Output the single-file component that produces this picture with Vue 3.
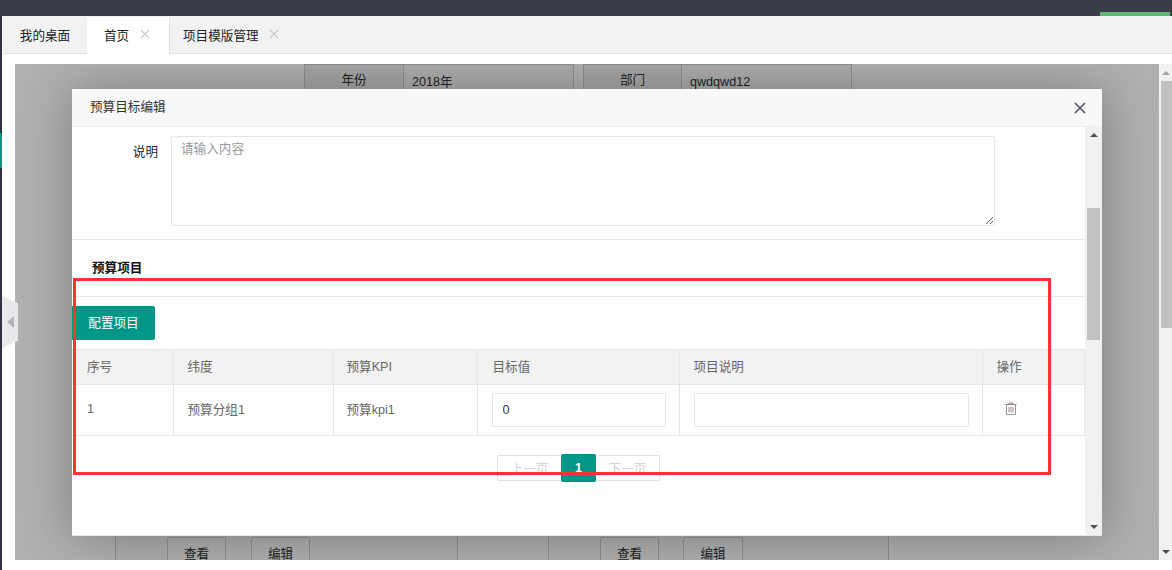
<script setup>
const tabs = [
  { label: '我的桌面', width: 84 },
  { label: '首页', width: 83, active: true, close: true },
  { label: '项目模版管理', width: 130, close: true },
]
const columns = [
  { title: '序号', width: 101 },
  { title: '纬度', width: 160 },
  { title: '预算KPI', width: 144 },
  { title: '目标值', width: 202 },
  { title: '项目说明', width: 303 },
  { title: '操作', width: 102 },
]
</script>

<template>
  <div class="page">
    <header class="topbar"><span class="progress"></span></header>
    <div class="main">
      <aside class="strip">
        <span class="strip-active"></span>
        <span class="collapse"></span>
      </aside>
      <div class="content">
        <nav class="tabs">
          <div
            v-for="tab in tabs"
            :key="tab.label"
            class="tab"
            :class="{ active: tab.active, closable: tab.close }"
            :style="{ width: tab.width + 'px' }"
          >
            <span>{{ tab.label }}</span>
            <svg v-if="tab.close" class="tab-x" width="10" height="10" viewBox="0 0 10 10">
              <path d="M1 1 L9 9 M9 1 L1 9" stroke="#c8c8c8" stroke-width="1.1" fill="none" />
            </svg>
          </div>
        </nav>
        <div class="body">
          <div class="frame">
            <div class="under">
              <div class="under-top">
                <div class="cell label w99">年份</div>
                <div class="cell value w171">2018年</div>
                <div class="cell label w98 gap9">部门</div>
                <div class="cell value w170">qwdqwd12</div>
              </div>
              <div class="under-bottom">
                <div class="group g1">
                  <button class="ghost">查看</button>
                  <button class="ghost second">编辑</button>
                </div>
                <div class="group g2">
                  <button class="ghost">查看</button>
                  <button class="ghost second">编辑</button>
                </div>
              </div>
            </div>
            <div class="shade"></div>

            <section class="modal">
              <div class="modal-title">
                <span>预算目标编辑</span>
                <svg class="modal-x" width="12" height="12" viewBox="0 0 12 12">
                  <path d="M1 1 L11 11 M11 1 L1 11" stroke="#555a63" stroke-width="1.7" fill="none" />
                </svg>
              </div>
              <div class="modal-main">
                <div class="modal-body">
                  <div class="form-row">
                    <label class="form-label">说明</label>
                    <div class="textarea-wrap">
                      <textarea class="textarea" placeholder="请输入内容"></textarea>
                    </div>
                  </div>
                  <h3 class="section">预算项目</h3>
                  <button class="primary">配置项目</button>
                  <table class="grid">
                    <colgroup>
                      <col v-for="c in columns" :key="c.title" :style="{ width: c.width + 'px' }" />
                    </colgroup>
                    <thead>
                      <tr>
                        <th v-for="c in columns" :key="c.title">{{ c.title }}</th>
                      </tr>
                    </thead>
                    <tbody>
                      <tr>
                        <td class="num">1</td>
                        <td>预算分组1</td>
                        <td>预算kpi1</td>
                        <td class="field"><input class="input" value="0" /></td>
                        <td class="field"><input class="input" /></td>
                        <td class="op">
                          <svg width="12" height="13" viewBox="0 0 12 13">
                            <path d="M0.5 2.5 H11.5 M4 2.5 V1 H8 V2.5" stroke="#888" fill="none" />
                            <path d="M1.5 3 V12.5 H10.5 V3" stroke="#999" fill="none" />
                            <path d="M4 5 V10.5 M6 5 V10.5 M8 5 V10.5" stroke="#aa9090" fill="none" />
                          </svg>
                        </td>
                      </tr>
                    </tbody>
                  </table>
                  <div class="pager-row">
                    <div class="pager">
                      <span class="pg prev">上一页</span>
                      <span class="pg current">1</span>
                      <span class="pg next">下一页</span>
                    </div>
                  </div>
                </div>
                <div class="modal-scroll">
                  <span class="arrow up dark"></span>
                  <span class="thumb"></span>
                  <span class="arrow down dark"></span>
                </div>
              </div>
            </section>
          </div>
          <div class="page-scroll">
            <span class="arrow up light"></span>
            <span class="page-thumb"></span>
            <span class="arrow down dark"></span>
          </div>
        </div>
      </div>
    </div>
    <div class="annotation"></div>
  </div>
</template>

<style scoped>
.page {
  position: relative;
  width: 1172px;
  height: 570px;
  overflow: hidden;
  display: flex;
  flex-direction: column;
  background: #fff;
  font-family: "Liberation Sans", "Noto Sans CJK SC", sans-serif;
  font-size: 12.6px;
  color: #333;
}
.topbar {
  position: relative;
  flex: 0 0 16px;
  background: #393d49;
}
.progress {
  position: absolute;
  right: 2px;
  bottom: 0;
  width: 70px;
  height: 4px;
  background: #5fb878;
}
.main {
  flex: 1;
  display: flex;
  min-height: 0;
}
.strip {
  position: relative;
  flex: 0 0 2px;
  background: #2f3340;
}
.strip-active {
  display: block;
  margin-top: 117px;
  height: 35px;
  background: #009688;
}
.collapse {
  position: absolute;
  left: 2px;
  top: 280px;
  width: 16px;
  height: 52px;
  background: #e9e9e9;
  clip-path: polygon(0 0, 100% 14%, 100% 86%, 0 100%);
  z-index: 3;
}
.collapse::after {
  content: "";
  position: absolute;
  left: 5px;
  top: 20px;
  border: 6px solid transparent;
  border-left-width: 0;
  border-right: 7px solid #b4b4b4;
}
.content {
  flex: 1;
  min-width: 0;
  display: flex;
  flex-direction: column;
}
.tabs {
  flex: 0 0 38px;
  box-sizing: border-box;
  margin-left: 1px;
  padding-top: 1px;
  display: flex;
  background: #f2f2f2;
  border-bottom: 1px solid #e2e2e2;
  color: #222;
}
.tab {
  box-sizing: border-box;
  display: flex;
  align-items: center;
  justify-content: center;
  height: 36px;
  padding-bottom: 2px;
  white-space: nowrap;
}
.tab.closable {
  justify-content: flex-start;
  padding-left: 17px;
}
.tab.closable:last-child {
  padding-left: 13px;
}
.tab.active {
  height: 37px;
  margin-bottom: -1px;
  padding-bottom: 3px;
  background: #fff;
  border-right: 1px solid #e2e2e2;
}
.tab-x {
  margin-left: 10px;
}
.tab.active .tab-x {
  margin-left: 11px;
}
.body {
  flex: 1;
  min-height: 0;
  display: flex;
  padding: 10px 0 10px 13px;
}
.frame {
  position: relative;
  flex: 1;
  min-width: 0;
  overflow: hidden;
  background: #fff;
}
.under {
  height: 100%;
  display: flex;
  flex-direction: column;
  justify-content: space-between;
}
.under-top {
  display: flex;
  padding-left: 289px;
}
.cell {
  box-sizing: border-box;
  height: 40px;
  padding-top: 6px;
  line-height: 18px;
  border: 1px solid #d0d0d0;
  border-bottom: 0;
}
.cell + .cell {
  border-left: 0;
}
.cell.label {
  text-align: center;
  background: #f2f2f2;
}
.cell.value {
  padding-left: 8px;
  padding-top: 8px;
  background: #fbfbfb;
}
.w99 { width: 100px; }
.w171 { width: 170px; }
.w98 { width: 99px; }
.w170 { width: 170px; }
.cell.gap9 {
  margin-left: 9px;
  border-left: 1px solid #d0d0d0;
}
.under-bottom {
  display: flex;
  height: 24px;
  overflow: hidden;
  padding-left: 100px;
}
.group {
  box-sizing: border-box;
  height: 24px;
  display: flex;
  border: 1px solid #d0d0d0;
  border-width: 0 1px;
  background: #fcfcfc;
}
.g1 {
  width: 343px;
  padding-left: 51px;
}
.g2 {
  width: 341px;
  margin-left: 90px;
  padding-left: 51px;
}
.ghost {
  box-sizing: border-box;
  flex: 0 0 59px;
  height: 32px;
  margin-top: 1px;
  padding: 0 0 2px;
  border: 1px solid #d0d0d0;
  border-radius: 2px;
  background: #fff;
  color: #333;
  font: inherit;
}
.ghost.second {
  margin-left: 25px;
}
.g2 .ghost.second {
  margin-left: 24px;
  flex-basis: 60px;
}
.shade {
  position: absolute;
  inset: 0;
  background: rgba(0, 0, 0, 0.31);
}
.modal {
  position: absolute;
  left: 57px;
  top: 25px;
  width: 1030px;
  height: 447px;
  display: flex;
  flex-direction: column;
  background: #fff;
  border-radius: 2px;
  box-shadow: 1px 1px 50px rgba(0, 0, 0, 0.3);
}
.modal-title {
  position: relative;
  flex: 0 0 38px;
  box-sizing: border-box;
  padding: 0 0 5px 18px;
  display: flex;
  align-items: center;
  background: #f8f8f8;
  border-bottom: 1px solid #eee;
}
.modal-x {
  position: absolute;
  right: 16px;
  top: 13px;
}
.modal-main {
  flex: 1;
  min-height: 0;
  display: flex;
  border-bottom: 1px solid #e8e8e8;
}
.modal-body {
  flex: 1;
  min-width: 0;
  overflow: hidden;
}
.form-row {
  display: flex;
  padding-top: 9px;
  padding-bottom: 13px;
  border-bottom: 1px solid #e6e6e6;
}
.form-label {
  flex: 0 0 86px;
  text-align: right;
  line-height: 32px;
  color: #222;
}
.textarea-wrap {
  margin-left: 13px;
  display: flex;
}
.textarea {
  box-sizing: border-box;
  display: block;
  width: 824px;
  height: 90px;
  padding: 2px 9px;
  border: 1px solid #e6e6e6;
  border-radius: 2px;
  font: inherit;
  line-height: 20px;
  color: #333;
  resize: vertical;
  outline: 0;
}
.textarea::placeholder {
  color: #999;
}
.section {
  box-sizing: border-box;
  height: 57px;
  margin: 0;
  padding-left: 20px;
  line-height: 56px;
  font-size: 12.6px;
  font-weight: 700;
  color: #111;
  border-bottom: 1px solid #e6e6e6;
}
.primary {
  display: block;
  box-sizing: border-box;
  width: 83px;
  height: 34px;
  margin-top: 9px;
  padding: 0 0 3px;
  border: 0;
  border-radius: 0 2px 2px 0;
  background: #009688;
  color: #fff;
  font: inherit;
}
.grid {
  width: 1012px;
  margin-top: 9px;
  table-layout: fixed;
  border-collapse: collapse;
  color: #666;
}
.grid th,
.grid td {
  box-sizing: border-box;
  padding: 0 13px 3px 14px;
  border: 1px solid #e6e6e6;
  text-align: left;
  font-weight: 400;
}
.grid th {
  padding-bottom: 4px;
}
.grid th:first-child,
.grid td:first-child {
  border-left: 0;
  padding-left: 15px;
}
.grid th:nth-child(3),
.grid td:nth-child(3) {
  padding-left: 13px;
}
.grid th:nth-child(4) {
  padding-left: 15px;
}
.grid td.field {
  padding: 0 13px 0 14px;
}
.grid th {
  height: 35px;
  background: #f2f2f2;
}
.grid td {
  height: 51px;
}
.grid .num {
  color: #666;
}
.grid .op {
  padding: 0 0 3px 22px;
}
.grid .op svg {
  display: block;
}
.input {
  box-sizing: border-box;
  display: block;
  width: 100%;
  height: 34px;
  padding: 0 10px;
  border: 1px solid #e6e6e6;
  border-radius: 2px;
  background: #fff;
  color: #333;
  font: inherit;
  outline: 0;
}
.pager-row {
  padding: 19px 0 0 425px;
}
.pager {
  box-sizing: border-box;
  display: flex;
  width: 163px;
  height: 26px;
  align-items: stretch;
  border: 1px solid #e2e2e2;
  border-radius: 2px;
  color: #d2d2d2;
}
.pg {
  display: flex;
  align-items: center;
  justify-content: center;
  padding-bottom: 1px;
}
.prev { width: 63px; }
.next { width: 63px; }
.current {
  width: 35px;
  height: 27px;
  margin-top: -2px;
  background: #009688;
  border-radius: 2px;
  color: #fff;
  font-weight: 700;
}
.modal-scroll {
  flex: 0 0 17px;
  position: relative;
  background: #f1f1f1;
}
.thumb {
  position: absolute;
  left: 2px;
  right: 2px;
  top: 81px;
  height: 132px;
  background: #c1c1c1;
}
.arrow {
  position: absolute;
  left: 50%;
  margin-left: -4px;
  border-left: 4px solid transparent;
  border-right: 4px solid transparent;
}
.arrow.up {
  top: 6px;
  border-bottom: 4px solid #505050;
}
.arrow.down {
  bottom: 6px;
  border-top: 4px solid #505050;
}
.arrow.up.light {
  top: 7px;
  border-bottom-color: #a3a3a3;
}
.page-scroll {
  flex: 0 0 13px;
  position: relative;
  background: #f1f1f1;
}
.page-thumb {
  position: absolute;
  left: 2px;
  right: 0;
  top: 17px;
  height: 247px;
  background: #c1c1c1;
}
.annotation {
  position: absolute;
  left: 73px;
  top: 278px;
  width: 978px;
  height: 197px;
  box-sizing: border-box;
  border: 3px solid #ff3333;
  pointer-events: none;
}
</style>
